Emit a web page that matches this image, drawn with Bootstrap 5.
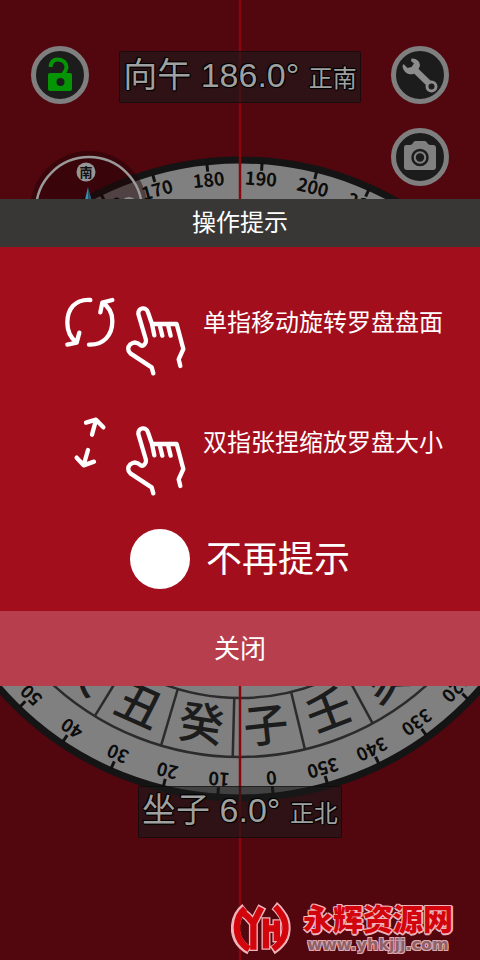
<!DOCTYPE html>
<html lang="zh-CN">
<head>
<meta charset="utf-8">
<meta name="viewport" content="width=device-width, initial-scale=1">
<title>操作提示</title>
<link rel="stylesheet" href="https://cdn.jsdelivr.net/npm/bootstrap@5.3.0/dist/css/bootstrap.min.css">
<style>
body{background:#52060e;font-family:"Liberation Sans","Noto Sans CJK SC",sans-serif}
.screen{isolation:isolate}
.dial{z-index:-1;font-family:"Noto Sans CJK SC",sans-serif}
.topbar{padding:46px 31px 13px}
.tool{width:58px;height:58px;border:5px solid #7f7f7f;border-radius:50%;background:#1c1c1c;padding:0}
.tool:hover{background:#2a2a2a}
.tools{gap:24px}
.readout{background:rgba(26,26,26,.62);border:1px solid rgba(10,5,5,.55);border-radius:2px;color:#a0a0a0;font-size:34px;line-height:46px;padding:0 3px;text-shadow:1px 0 #000,-1px 0 #000,0 1px #000,0 -1px #000,1px 1px 1px #000,-1px -1px 1px #000}
.readout small{font-size:24px}
.facing{margin-top:5px}
.sitting{margin-top:100px}
.tips{background:#a30e1d;color:#fff;font-family:"Noto Sans CJK SC",sans-serif}
.tips-head{background:#383735;font-size:24px;line-height:44px;padding-bottom:4px}
.tips-body{padding:45px 0 22px}
.hint-list{gap:30px;padding-left:60px}
.hint{gap:13px;font-size:24px;line-height:58px}
.hint svg{width:130px;height:90px;flex:none}
.skip{margin-top:27px;gap:16px;font-size:36px;line-height:54px}
.skip .form-check-input{width:60px;height:60px;margin:0;border:0;border-radius:50%;background-color:#fff}
.skip .form-check-input:checked{background-color:#fff;box-shadow:inset 0 0 0 8px #b73e4c}
.close-bar{background:#b73e4c;color:#fff;font-size:26px;line-height:71px;border:0}
.site{gap:12px;padding:0 27px 4px 0}
.site-name{font:900 30px/34px "Noto Sans CJK SC",sans-serif;color:#d2040c;text-shadow:1px 1px #eeb4bb,-1px -1px #eeb4bb,1px -1px #eeb4bb,-1px 1px #eeb4bb,0 2px #eeb4bb,2px 0 #eeb4bb}
.site-url{font:bold 16px/22px "DejaVu Sans",sans-serif;color:#8e6167;text-shadow:1px 1px #dca9af,-1px -1px #dca9af,1px -1px #dca9af,-1px 1px #dca9af}
</style>
<script src="https://cdn.jsdelivr.net/npm/bootstrap@5.3.0/dist/js/bootstrap.bundle.min.js"></script>
</head>
<body>
<div class="screen position-relative min-vh-100 d-flex flex-column overflow-hidden">
  <svg class="dial position-absolute top-0 start-0 w-100 h-100" viewBox="0 0 480 960" preserveAspectRatio="xMidYMid slice" aria-hidden="true">
    <circle cx="240" cy="479" r="319" fill="#808080" stroke="#141414" stroke-width="7"/>
    <g fill="none" stroke="#2b2b2b" stroke-width="2.5"><circle cx="240" cy="479" r="278"/><circle cx="240" cy="479" r="219"/></g>
    <g id="marks" transform="translate(240 479)" text-anchor="middle"></g>
    <path d="M240 0V960" stroke="#88060d" stroke-width="2.5"/>
    <g>
      <circle cx="89" cy="210" r="59" fill="#200306" fill-opacity=".5"/>
      <circle cx="89" cy="210" r="53" fill="none" stroke="#9a9a9a" stroke-width="2.5"/>
      <circle cx="86" cy="172" r="9.500" fill="#969696"/>
      <text x="86" y="177" font-size="13" font-weight="700" text-anchor="middle" fill="#111">南</text>
      <circle cx="129" cy="206" r="9" fill="#8c8c8c"/>
      <path d="M88 187 82 212 89 209Z" fill="#3b8cae"/><path d="M88 187 95 212 89 209Z" fill="#23627e"/>
    </g>
  </svg>

  <header class="topbar d-flex justify-content-between align-items-start">
    <button class="tool d-flex" type="button" aria-label="解锁">
      <svg viewBox="0 0 48 48" width="48" height="48"><path d="M14.500 16C15 10.500 18 8.500 22 8.500C27 8.500 30.500 12 30.500 16C30.500 19 29 21 26.500 24" fill="none" stroke="#049404" stroke-width="4"/><rect x="12" y="22" width="24" height="18" rx="2" fill="#049404"/><circle cx="24.500" cy="31" r="4" fill="#1c1c1c"/></svg>
    </button>
    <div class="readout facing">向午 186.0° <small>正南</small></div>
    <div class="tools d-flex flex-column">
      <button class="tool d-flex" type="button" aria-label="设置">
        <svg viewBox="0 0 48 48" width="48" height="48"><path d="M18 18 35 34.500" stroke="#8c8c8c" stroke-width="6.500" fill="none"/><path d="M15.500 7.500C20 7 24 10 24 14.500L22.500 18 17.500 23C12 24.500 7 20.500 6.500 15L7.500 13 11.500 17 15.500 16 18 12.500 15 10Z" fill="#8c8c8c"/><circle cx="35.500" cy="35.500" r="4.500" fill="#1c1c1c" stroke="#8c8c8c" stroke-width="3"/></svg>
      </button>
      <button class="tool d-flex" type="button" aria-label="拍照">
        <svg viewBox="0 0 48 48" width="48" height="48"><path d="M10 12H14Q16 12 17 10L18 8.500Q18.500 8 20 8H29Q30 8 31 9.500L32 11Q33 12 35 12H37Q40 12 40 15V34Q40 37 37 37H11Q8 37 8 34V15Q8 12 10 12Z" fill="#808080"/><circle cx="24" cy="24.500" r="7.500" fill="none" stroke="#1c1c1c" stroke-width="2.500"/><circle cx="24" cy="24.500" r="4.200" fill="#1c1c1c"/></svg>
      </button>
    </div>
  </header>

  <section class="tips" role="dialog" aria-labelledby="tips-title">
    <h1 class="tips-head text-center fw-normal m-0" id="tips-title">操作提示</h1>
    <div class="tips-body">
      <div class="hint-list d-flex flex-column">
        <div class="hint d-flex">
          <svg viewBox="60 36 390 270" fill="none" stroke="#fff" stroke-width="13" stroke-linecap="round" stroke-linejoin="round" aria-hidden="true">
            <path d="M151 60C105 57 82 87 82 128C82 155 92 174 110 187M82 194 110 188 118 158M147 194C191 196 217 165 217 124C217 99 206 79 187 68M217 60 187 68 181 97"/>
            <g id="hand"><path d="M340 280 335 262 271 220C262 211 263 201 271 193C283 183 293 187 302 196C310 200 319 190 318 180L295 102C294 81 320 80 324 97L336 132H410L430 207 416 238 421 258M336 132 343 166M359 135 367 167M384 135 392 167"/></g>
          </svg>
          <span>单指移动旋转罗盘盘面</span>
        </div>
        <div class="hint d-flex">
          <svg viewBox="60 36 390 270" fill="none" stroke="#fff" stroke-width="13" stroke-linecap="round" stroke-linejoin="round" aria-hidden="true">
            <path d="M156 104 168 60M138 68 168 59 190 82M144 150 131 195M110 173 131 196 162 185"/>
            <use href="#hand"/>
          </svg>
          <span>双指张捏缩放罗盘大小</span>
        </div>
      </div>
      <div class="skip d-flex justify-content-center">
        <input class="form-check-input" type="checkbox" id="skip-tips">
        <label for="skip-tips">不再提示</label>
      </div>
    </div>
    <button class="close-bar d-block w-100 px-0 pt-0 pb-1" type="button">关闭</button>
  </section>

  <div class="readout sitting align-self-center">坐子 6.0° <small>正北</small></div>

  <footer class="site d-flex justify-content-end align-items-center mt-auto">
    <svg viewBox="36 24 180 160" width="60" height="53" fill="none" stroke-linejoin="round" aria-hidden="true">
      <g stroke="#eeb4bb" stroke-width="27"><path d="M78 41C44 67 37 123 70 155Q79 164 91 170M66 52Q86 66 103 88L130 37M103 78V172M141 70V168M141 104H178M174 76V146M166 35Q179 45 188 60C209 86 205 129 185 149Q176 160 160 170"/></g>
      <g stroke="#d2040c" stroke-width="19"><path d="M78 44C48 69 44 122 72 152Q80 161 90 166M68 54Q86 66 103 88L127 41M103 78V168M141 74V164M141 104H178M174 80V142M169 38Q179 48 188 62C206 88 203 127 184 146Q174 158 163 166"/></g>
    </svg>
    <div class="d-flex flex-column align-items-center">
      <span class="site-name">永辉资源网</span>
      <span class="site-url">www.yhkjjj.com</span>
    </div>
  </footer>
</div>
<script>
const marks = document.getElementById('marks');
const heading = 186;
const add = (tag, attrs, text) => {
  const el = document.createElementNS('http://www.w3.org/2000/svg', tag);
  for (const k in attrs) el.setAttribute(k, attrs[k]);
  if (text) el.textContent = text;
  marks.appendChild(el);
};
[320, 330, 340, 350, 0, 10, 20, 30, 40, 50, 160, 170, 180, 190, 200, 210].forEach(deg => {
  const rot = `rotate(${deg - heading})`;
  add('path', {d: 'M0-317V-309', stroke: '#111', 'stroke-width': 3, transform: rot});
  add('text', {y: -294, 'font-size': 18, 'font-weight': 700, fill: '#0c0c0c', transform: rot}, String(deg));
});
[['艮', 45], ['丑', 30], ['癸', 15], ['子', 0], ['壬', 345], ['亥', 330]].forEach(([name, deg]) => {
  add('text', {y: 264, 'font-size': 45, 'font-weight': 500, fill: '#1c1c1c', transform: `rotate(${deg - heading + 180})`}, name);
  add('path', {d: 'M0-278V-219', stroke: '#2b2b2b', 'stroke-width': 2.5, transform: `rotate(${deg - heading + 7.5})`});
});
</script>
</body>
</html>
